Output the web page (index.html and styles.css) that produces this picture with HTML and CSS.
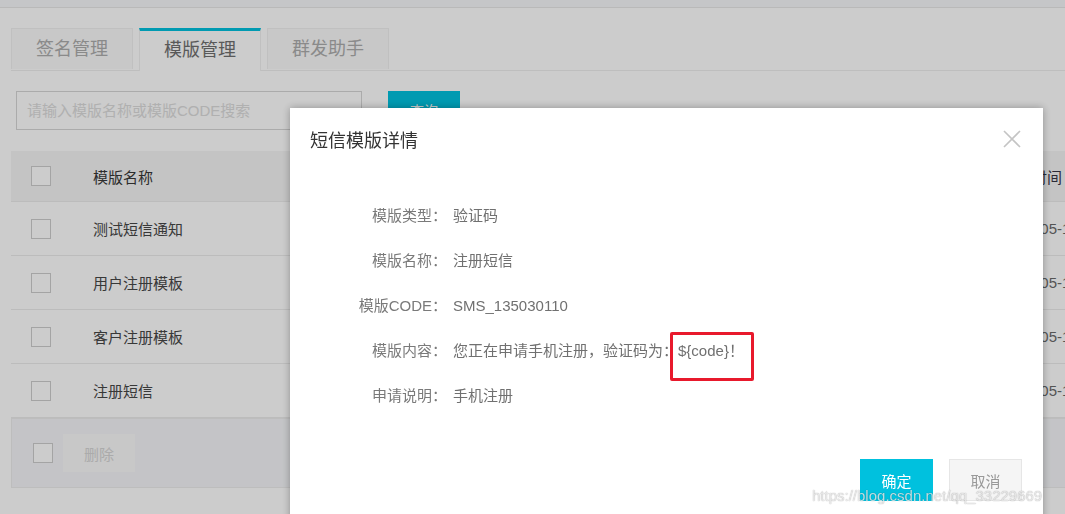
FILE: index.html
```html
<!DOCTYPE html>
<html lang="zh-CN">
<head>
  <meta charset="UTF-8" />
  <title>模版管理</title>
  <link rel="stylesheet" href="styles.css">
</head>
<body>
  <div class="topbar"></div>

  <div class="page">
    <div class="tabs">
      <div class="tab">签名管理</div>
      <div class="tab active">模版管理</div>
      <div class="tab">群发助手</div>
    </div>

    <div class="search">
      <input type="text" class="search-input" placeholder="请输入模版名称或模版CODE搜索">
      <button class="btn-query">查询</button>
    </div>

    <div class="table">
      <div class="row head">
        <span class="cell-check"><i class="checkbox"></i></span>
        <span class="cell-name">模版名称</span>
        <span class="cell-time">创建时间</span>
      </div>
      <div class="row">
        <span class="cell-check"><i class="checkbox"></i></span>
        <span class="cell-name">测试短信通知</span>
        <span class="cell-time">2019-05-16</span>
      </div>
      <div class="row">
        <span class="cell-check"><i class="checkbox"></i></span>
        <span class="cell-name">用户注册模板</span>
        <span class="cell-time">2019-05-15</span>
      </div>
      <div class="row">
        <span class="cell-check"><i class="checkbox"></i></span>
        <span class="cell-name">客户注册模板</span>
        <span class="cell-time">2019-05-15</span>
      </div>
      <div class="row">
        <span class="cell-check"><i class="checkbox"></i></span>
        <span class="cell-name">注册短信</span>
        <span class="cell-time">2019-05-15</span>
      </div>
      <div class="table-foot">
        <i class="checkbox"></i>
        <button class="btn-delete">删除</button>
      </div>
    </div>
  </div>

  <!-- dialog -->
  <div class="mask"></div>
  <div class="dialog">
    <div class="dialog-head">
      <h2>短信模版详情</h2>
      <svg class="close" width="18" height="18" viewBox="0 0 18 18">
        <path d="M1 1 L17 17 M17 1 L1 17" stroke="#c4c4c4" stroke-width="1.6" fill="none"/>
      </svg>
    </div>
    <div class="dialog-body">
      <div class="field"><span class="label">模版类型：</span><span class="value">验证码</span></div>
      <div class="field"><span class="label">模版名称：</span><span class="value">注册短信</span></div>
      <div class="field"><span class="label">模版CODE：</span><span class="value">SMS_135030110</span></div>
      <div class="field"><span class="label">模版内容：</span><span class="value">您正在申请手机注册，验证码为：<span class="mark">${code}！</span></span></div>
      <div class="field"><span class="label">申请说明：</span><span class="value">手机注册</span></div>
    </div>
    <div class="dialog-foot">
      <button class="btn-ok">确定</button>
      <button class="btn-cancel">取消</button>
    </div>
  </div>

  <div class="watermark">https://blog.csdn.net/qq_33229669</div>
</body>
</html>
```

FILE: styles.css
```css
body {
  margin: 0;
  font-family: 'Liberation Sans', 'Noto Sans CJK SC', sans-serif;
  background-color: #fff;
  color: #333;
  overflow: hidden;
  height: 514px;
}

.topbar {
  height: 7px;
  background-color: #f7f8fa;
  border-bottom: 1px solid #e8e8e8;
}

.page {
  padding: 20px 0 0 11px;
}

/* tabs */
.tabs {
  display: flex;
  gap: 6px;
  border-bottom: 1px solid #eeeeee;
}

.tab {
  width: 120px;
  height: 40px;
  line-height: 40px;
  text-align: center;
  font-size: 18px;
  color: #adadad;
  background-color: #fafafa;
  border: 1px solid #f0f0f0;
  border-bottom: none;
}

.tab.active {
  height: 39px;
  border-top: 3px solid #00c1de;
  line-height: 38px;
  color: #707070;
  background-color: #fff;
  margin-bottom: -1px;
  padding-bottom: 1px;
}

/* search */
.search {
  display: flex;
  align-items: flex-start;
  margin: 20px 0 0 5px;
}

.search-input {
  width: 346px;
  height: 39px;
  box-sizing: border-box;
  border: 1px solid #d6d6d6;
  padding: 0 10px;
  font-family: 'Liberation Sans', 'Noto Sans CJK SC', sans-serif;
  font-size: 15px;
  outline: none;
}

.search-input::placeholder {
  color: #dcdcdc;
}

.btn-query {
  margin-left: 26px;
  width: 72px;
  height: 38px;
  border: none;
  background-color: #00c1de;
  color: #fff;
  font-family: 'Liberation Sans', 'Noto Sans CJK SC', sans-serif;
  font-size: 14px;
}

/* table */
.table {
  margin-top: 21px;
  width: 1195px;
  font-size: 15px;
}

.row {
  display: grid;
  grid-template-columns: 82px 909px 200px;
  align-items: center;
  height: 54px;
  border-bottom: 1px solid #ececec;
  box-sizing: border-box;
  color: #474747;
}

.row.head {
  height: 51px;
  background-color: #f5f5f5;
  color: #383838;
}

.cell-check {
  padding-left: 20px;
  display: flex;
}

.cell-time {
  color: #6a6a6a;
}

.row.head .cell-time {
  color: #353545;
}

.checkbox {
  display: block;
  width: 18px;
  height: 18px;
  border: 1px solid #cdcdcd;
  background-color: #fff;
}

.table-foot {
  display: flex;
  align-items: center;
  height: 70px;
  box-sizing: border-box;
  padding-left: 21px;
  background-color: #f5f6f9;
  border: 1px solid #ededed;
}

.btn-delete {
  margin-left: 10px;
  width: 72px;
  height: 38px;
  border: none;
  background-color: #fafafa;
  color: #d6d6d6;
  font-family: 'Liberation Sans', 'Noto Sans CJK SC', sans-serif;
  font-size: 15px;
}

/* dialog */
.mask {
  position: fixed;
  left: 0;
  top: 0;
  width: 100%;
  height: 100%;
  background-color: rgba(0, 0, 0, 0.2);
}

.dialog {
  position: fixed;
  left: 290px;
  top: 108px;
  width: 753px;
  height: 430px;
  background-color: #fff;
  box-shadow: 0 0 8px rgba(0, 0, 0, 0.3);
}

.dialog-head {
  display: flex;
  justify-content: space-between;
  align-items: flex-start;
  padding: 20px 22px 20px 20px;
}

.dialog-head h2 {
  margin: 0;
  font-size: 18px;
  font-weight: normal;
  line-height: 26px;
  color: #333;
}

.close {
  margin-top: 2px;
}

.dialog-body {
  padding-top: 19px;
  font-size: 15px;
}

.field {
  display: flex;
  height: 45px;
  line-height: 45px;
}

.label {
  width: 157px;
  text-align: right;
  color: #7a7a7a;
}

.value {
  margin-left: 6px;
  color: #707070;
}

.mark {
  position: relative;
}

.mark::after {
  content: '';
  position: absolute;
  left: -8px;
  top: -10px;
  width: 78px;
  height: 43px;
  border: 3px solid #e8192c;
  border-radius: 2px;
}

.dialog-foot {
  display: flex;
  justify-content: flex-end;
  gap: 16px;
  margin-top: 41px;
  padding-right: 21px;
}

.dialog-foot button {
  width: 73px;
  height: 42px;
  font-family: 'Liberation Sans', 'Noto Sans CJK SC', sans-serif;
  font-size: 15px;
}

.btn-ok {
  border: none;
  background-color: #00c1de;
  color: #fff;
}

.btn-cancel {
  border: 1px solid #e6e6e6;
  background-color: #f5f5f5;
  color: #999;
}

.watermark {
  position: fixed;
  left: 812px;
  top: 487px;
  font-size: 15px;
  color: rgba(255, 255, 255, 0.75);
  text-shadow: 0 0 1px rgba(0, 0, 0, 0.45);
}
```
